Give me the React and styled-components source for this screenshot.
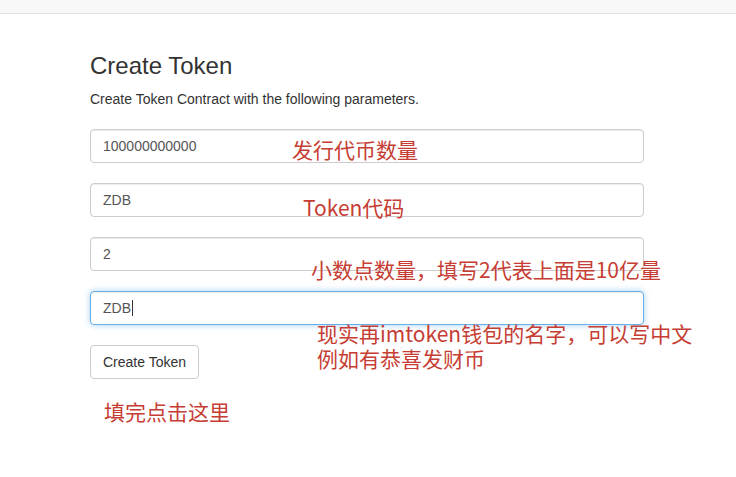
import React from 'react';
import styled, { createGlobalStyle } from 'styled-components';

const GlobalStyle = createGlobalStyle`
    html, body {
        margin: 0;
        padding: 0;
        background: #fff;
    }
    body {
        font-family: "Liberation Sans", Arial, sans-serif;
        font-size: 14px;
        line-height: 1.42857;
        color: #333;
    }
    * { box-sizing: border-box; }
`;

const Page = styled.div`
    position: relative;
    width: 736px;
    height: 477px;
    overflow: hidden;
`;

const TopBar = styled.div`
    height: 14px;
    background: #f8f8f8;
    border-bottom: 1px solid #e3e3e3;
`;

const Container = styled.div`
    width: 554px;
    margin-left: 90px;
    padding-top: 39px;
`;

const Title = styled.h3`
    margin: 0 0 10px;
    font-size: 24px;
    font-weight: 400;
    line-height: 1.1;
    color: #333;
`;

const Lead = styled.p`
    margin: 0 0 20px;
    font-size: 14px;
    line-height: 20px;
`;

const Form = styled.form`
    display: flex;
    flex-direction: column;
    gap: 20px;
`;

const FieldWrap = styled.div`
    position: relative;
`;

const Input = styled.input`
    display: block;
    width: 100%;
    height: 34px;
    padding: 6px 12px;
    font-family: "Liberation Sans", Arial, sans-serif;
    font-size: 14px;
    color: #555;
    background: #fff;
    border: 1px solid ${p => (p.$focused ? '#66afe9' : '#ccc')};
    border-radius: 4px;
    outline: none;
    box-shadow: ${p => (p.$focused
        ? 'inset 0 1px 1px rgba(0,0,0,.075), 0 0 6px rgba(102,175,233,.6)'
        : 'inset 0 1px 1px rgba(0,0,0,.075)')};
`;

const Caret = styled.span`
    position: absolute;
    left: 42px;
    top: 9px;
    width: 1px;
    height: 16px;
    background: #333;
`;

const Button = styled.button`
    align-self: flex-start;
    height: 34px;
    padding: 6px 12px;
    font-family: "Liberation Sans", Arial, sans-serif;
    font-size: 14px;
    line-height: 20px;
    color: #333;
    background: #fff;
    border: 1px solid #ccc;
    border-radius: 4px;
`;

// red notes pasted over the screenshot
const Note = styled.div`
    position: absolute;
    left: ${p => p.$x}px;
    top: ${p => p.$y}px;
    font-family: "Noto Sans CJK SC", "Noto Sans", sans-serif;
    font-size: 21px;
    line-height: 25px;
    color: #c63d34;
    white-space: nowrap;
`;

const fields = [
    { value: '100000000000' },
    { value: 'ZDB' },
    { value: '2' },
    { value: 'ZDB', focused: true },
];

export default function App() {
    return (
        <Page>
            <GlobalStyle />
            <TopBar />
            <Container>
                <Title>Create Token</Title>
                <Lead>Create Token Contract with the following parameters.</Lead>
                <Form onSubmit={e => e.preventDefault()}>
                    {fields.map((f, i) => (
                        <FieldWrap key={i}>
                            <Input type="text" readOnly value={f.value} $focused={f.focused} />
                            {f.focused && <Caret />}
                        </FieldWrap>
                    ))}
                    <Button type="submit">Create Token</Button>
                </Form>
            </Container>

            <Note $x={292} $y={137}>发行代币数量</Note>
            <Note $x={303} $y={195}>Token代码</Note>
            <Note $x={311} $y={257}>小数点数量，填写2代表上面是10亿量</Note>
            <Note $x={317} $y={321}>
                现实再imtoken钱包的名字，可以写中文<br />
                例如有恭喜发财币
            </Note>
            <Note $x={104} $y={399}>填完点击这里</Note>
        </Page>
    );
}
